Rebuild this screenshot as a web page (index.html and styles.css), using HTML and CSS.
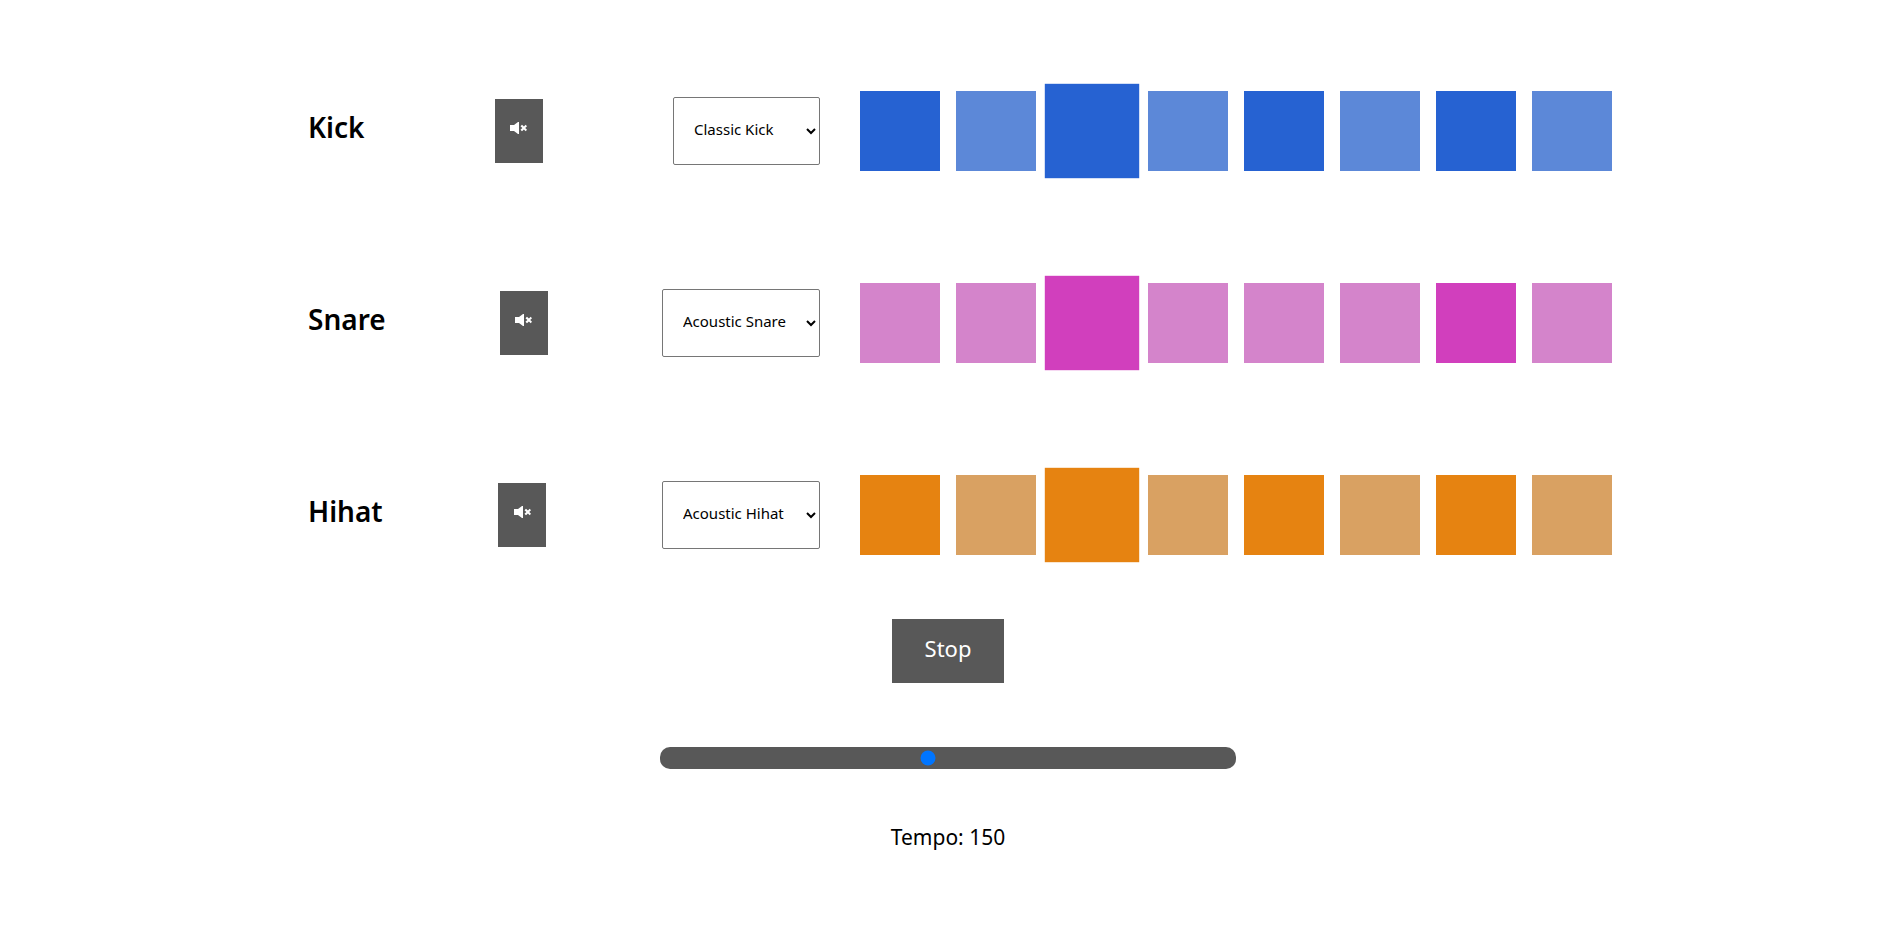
FILE: index.html
```html
<!DOCTYPE html>
<html lang="en">
<head>
<meta charset="utf-8">
<title>Beatmaker</title>
<link rel="stylesheet" href="styles.css">
</head>
<body>
<svg class="sprite" aria-hidden="true">
  <symbol id="mute" viewBox="0 0 17 12">
    <path d="M0 3h4L8 0h1v12H8L4 9H0z"/>
    <path d="M10.5 4.2L12 2.8l1.9 1.8 1.8-1.8L17 4.2 15.200 6 17 7.800l-1.300 1.400-1.800-1.800L12 9.200l-1.500-1.400L12.400 6z"/>
  </symbol>
</svg>
<main class="sequencer">
  <section class="track kick">
    <div class="controls">
      <h1>Kick</h1>
      <button class="mute" aria-label="Mute kick"><svg><use href="#mute"/></svg></button>
      <select class="short" aria-label="Kick sound"><option>Classic Kick</option></select>
    </div>
    <div class="pads">
      <button class="pad active" aria-label="Kick 1"></button>
      <button class="pad" aria-label="Kick 2"></button>
      <button class="pad active current" aria-label="Kick 3"></button>
      <button class="pad" aria-label="Kick 4"></button>
      <button class="pad active" aria-label="Kick 5"></button>
      <button class="pad" aria-label="Kick 6"></button>
      <button class="pad active" aria-label="Kick 7"></button>
      <button class="pad" aria-label="Kick 8"></button>
    </div>
  </section>
  <section class="track snare">
    <div class="controls">
      <h1>Snare</h1>
      <button class="mute" aria-label="Mute snare"><svg><use href="#mute"/></svg></button>
      <select aria-label="Snare sound"><option>Acoustic Snare</option></select>
    </div>
    <div class="pads">
      <button class="pad" aria-label="Snare 1"></button>
      <button class="pad" aria-label="Snare 2"></button>
      <button class="pad active current" aria-label="Snare 3"></button>
      <button class="pad" aria-label="Snare 4"></button>
      <button class="pad" aria-label="Snare 5"></button>
      <button class="pad" aria-label="Snare 6"></button>
      <button class="pad active" aria-label="Snare 7"></button>
      <button class="pad" aria-label="Snare 8"></button>
    </div>
  </section>
  <section class="track hihat">
    <div class="controls">
      <h1>Hihat</h1>
      <button class="mute" aria-label="Mute hihat"><svg><use href="#mute"/></svg></button>
      <select aria-label="Hihat sound"><option>Acoustic Hihat</option></select>
    </div>
    <div class="pads">
      <button class="pad active" aria-label="Hihat 1"></button>
      <button class="pad" aria-label="Hihat 2"></button>
      <button class="pad active current" aria-label="Hihat 3"></button>
      <button class="pad" aria-label="Hihat 4"></button>
      <button class="pad active" aria-label="Hihat 5"></button>
      <button class="pad" aria-label="Hihat 6"></button>
      <button class="pad active" aria-label="Hihat 7"></button>
      <button class="pad" aria-label="Hihat 8"></button>
    </div>
  </section>
  <button class="play">Stop</button>
  <input class="tempo" id="tempo" type="range" min="20" max="300" value="150">
  <label class="tempo-text" for="tempo">Tempo: 150</label>
</main>
</body>
</html>
```
FILE: styles.css
```css
* {
  box-sizing: border-box;
  margin: 0;
}

body {
  font-family: "Noto Sans", "Open Sans", sans-serif;
  background: #fff;
  color: #000;
}

button {
  border: 0;
  font-family: inherit;
}

.sprite {
  display: none;
}

.sequencer {
  display: flex;
  flex-direction: column;
  align-items: center;
  justify-content: center;
  min-height: 100vh;
  padding: 0 4px 42px 0;
}

.track {
  display: flex;
  align-items: center;
  height: 192px;
}

.controls {
  display: flex;
  align-items: center;
  justify-content: space-between;
  width: 576px;
  padding: 0 32px;
}

h1 {
  padding-bottom: 8px;
  font-size: 28px;
  line-height: 40px;
  font-weight: 600;
}

.mute {
  width: 48px;
  height: 64px;
  padding: 0 0 6px;
  background: #585858;
  color: #fff;
}

.mute svg {
  display: block;
  width: 17px;
  height: 12px;
  margin: 0 auto;
  fill: currentColor;
}

select {
  width: 158px;
  height: 68px;
  padding: 16px 16px 20px;
  border: 1px solid #767676;
  border-radius: 2px;
  background: #fff;
  color: #000;
  font-family: inherit;
  font-size: 15px;
}

select.short {
  width: 147px;
}

.pads {
  display: flex;
  gap: 16px;
  padding: 0 8px;
}

.pad {
  width: 80px;
  height: 80px;
}

.pad.current {
  transform: scale(1.18);
}

.kick .pad { background: #5c88d8; }
.kick .pad.active { background: #2662d2; }
.snare .pad { background: #d484cb; }
.snare .pad.active { background: #d13fbd; }
.hihat .pad { background: #d9a162; }
.hihat .pad.active { background: #e68311; }

.play {
  height: 64px;
  width: 112px;
  margin-top: 8px;
  padding-bottom: 8px;
  background: #585858;
  color: #fff;
  font-size: 22px;
}

.tempo {
  appearance: none;
  width: 576px;
  margin: 64px 0 52px;
  padding: 3px;
  border-radius: 10px;
  background: #585858;
}

.tempo-text {
  font-size: 21px;
  line-height: 32px;
}
```
